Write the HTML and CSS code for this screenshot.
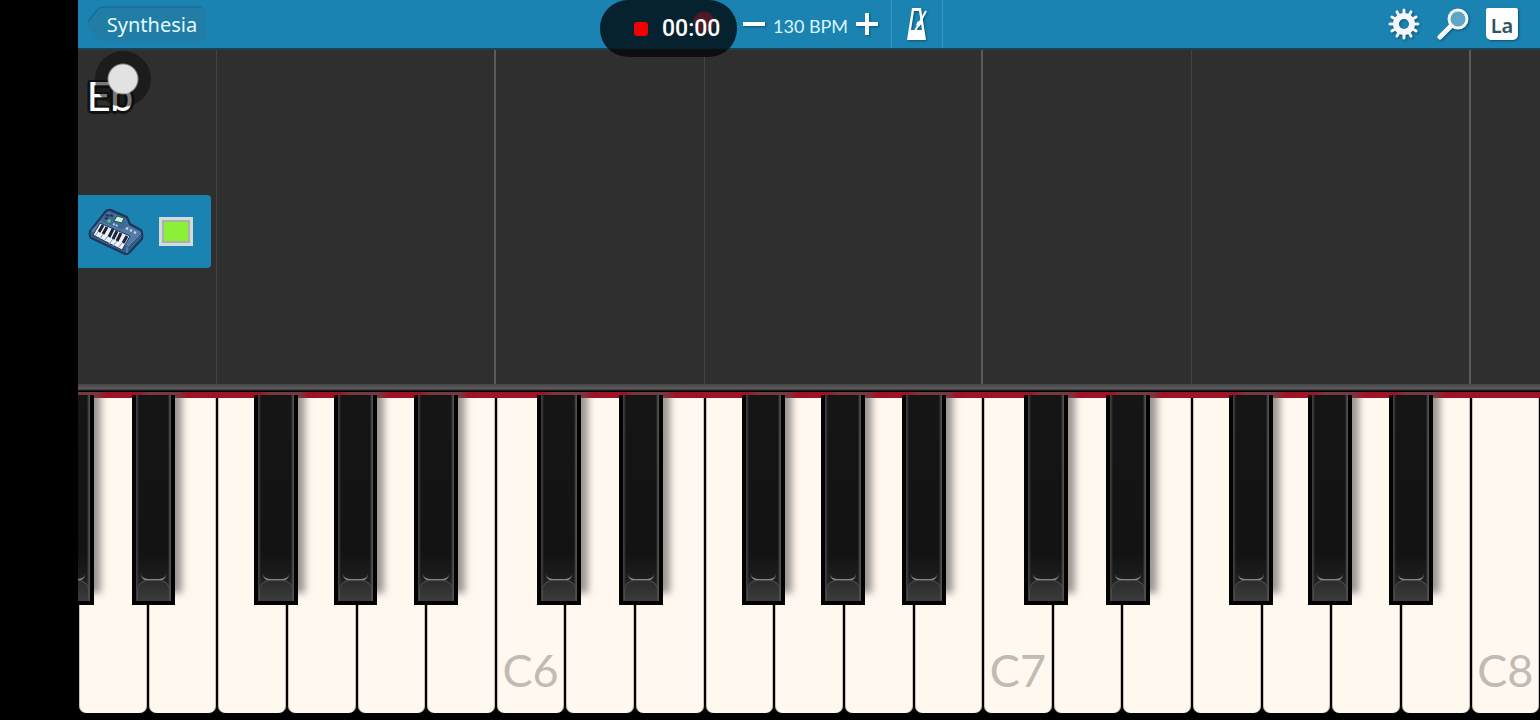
FILE: index.html
```html
<!DOCTYPE html>
<html lang="en">
<head>
    <meta charset="UTF-8">
    <meta name="viewport" content="width=device-width, initial-scale=1.0">
    <title>Synthesia</title>
    <link rel="stylesheet" href="styles.css">
</head>
<body>
    <div class="app">
        <header class="toolbar">
            <button class="back">
                <svg class="back-shape" viewBox="0 0 118 35" preserveAspectRatio="none" aria-hidden="true">
                    <path d="M17 1H114Q117 1 117 4V31Q117 34 114 34H17Q13 34 10 30L2 20Q0 17.500 2 15L10 5Q13 1 17 1Z" fill="#217da6"/>
                    <path d="M2 15L10 5Q13 1 17 1H114" fill="none" stroke="#17688f"/>
                </svg>
                <span class="back-label">Synthesia</span>
            </button>
            <div class="tempo">
                <button class="tempo-step" aria-label="Slower">
                    <svg width="24" height="24" viewBox="0 0 24 24"><path d="M1 12H23" stroke="#fff" stroke-width="4"/></svg>
                </button>
                <span class="bpm">130 BPM</span>
                <button class="tempo-step" aria-label="Faster">
                    <svg width="24" height="24" viewBox="0 0 24 24"><path d="M1 12H23M12 1V23" stroke="#fff" stroke-width="4"/></svg>
                </button>
            </div>
            <button class="metronome" aria-label="Metronome">
                <svg width="22" height="34" viewBox="0 0 22 34">
                    <path fill="#fff" fill-rule="evenodd" d="M6 1H15L20 33H1ZM8 4L5 23H16L13 4Z"/>
                    <path d="M9 24L20 4" stroke="#fff" stroke-width="2"/>
                    <path d="M12 14L16 16L13 20L10 18Z" fill="#fff"/>
                </svg>
            </button>
            <div class="tools">
                <button aria-label="Settings">
                    <svg width="32" height="32" viewBox="0 0 32 32">
                        <circle cx="16" cy="16" r="8" fill="none" stroke="#f4f7fa" stroke-width="6"/>
                        <g stroke="#f4f7fa" stroke-width="3" stroke-linecap="round">
                            <path d="M16 2V7M16 25V30M2 16H7M25 16H30"/>
                            <path d="M16 2V7M16 25V30M2 16H7M25 16H30" transform="rotate(30 16 16)"/>
                            <path d="M16 2V7M16 25V30M2 16H7M25 16H30" transform="rotate(60 16 16)"/>
                        </g>
                    </svg>
                </button>
                <button aria-label="Zoom">
                    <svg width="32" height="32" viewBox="0 0 32 32">
                        <path d="M3 29L14 18" stroke="#f4f7fa" stroke-width="5" stroke-linecap="round"/>
                        <circle cx="21" cy="11" r="9" fill="#5fa5c5" stroke="#f4f7fa" stroke-width="3"/>
                    </svg>
                </button>
                <button class="note-labels" aria-label="Note labels">La</button>
            </div>
            <div class="recorder"><span class="rec-dot"></span><time>00:00</time></div>
        </header>

        <main class="roll">
            <div class="lane octave-f" style="flex-grow: 2"></div>
            <div class="lane octave-c" style="flex-grow: 4"></div>
            <div class="lane octave-f" style="flex-grow: 3"></div>
            <div class="lane octave-c" style="flex-grow: 4"></div>
            <div class="lane octave-f" style="flex-grow: 3"></div>
            <div class="lane octave-c" style="flex-grow: 4"></div>
            <div class="lane" style="flex-grow: 1"></div>
            <div class="chord">Eb</div>
            <div class="touch"></div>
            <div class="devices">
                <button aria-label="Keyboard">
                    <svg width="56" height="48" viewBox="0 0 56 48">
                        <path d="M2 23L18 3Q20 1 23 2L39 9L42 16L53 22Q55 24 54 31L41 45Q38 47 35 45L3 30Q1 28 2 23Z" fill="#345f8b" stroke="#1c3559" stroke-width="2"/>
                        <path d="M3 23L20 4L38 11L41 18L53 24L39 38Z" fill="#547da6"/>
                        <path d="M19 5L37 11L40 18L34 22L12 13Z" fill="#416993"/>
                        <path d="M12 15L42 28L34 42L5 27Z" fill="#edf0f7" stroke="#1c3559"/>
                        <path d="M15 17L11 24M19 19L15 26M25 21L21 29M29 23L25 31M33 25L29 33M39 28L35 35" stroke="#18233b" stroke-width="3"/>
                        <path d="M10 24L7 28M15 26L12 31M20 28L16 33M25 31L21 36M29 33L25 38M34 35L30 40" stroke="#8796ab"/>
                        <path d="M29 8L36 10L34 15L26 13Z" fill="#c8f6c6" stroke="#2b5072"/>
                        <path d="M18 7L21 8M17 10L20 11M22 7L25 8" stroke="#1d3455" stroke-width="2"/>
                        <circle cx="21" cy="13" r="2" fill="#4cb997"/>
                        <path d="M38 20L40 21M42 22L44 23M46 24L48 25" stroke="#c9d6ec" stroke-width="2"/>
                        <path d="M25 16L30 18" stroke="#bacdea" stroke-width="2" stroke-dasharray="2 1"/>
                        <path d="M39 39V45M40 38L53 25" stroke="#7396ba"/>
                    </svg>
                </button>
                <button class="screen" aria-label="Display"></button>
            </div>
        </main>

        <div class="rail"></div>

        <section class="piano" aria-label="Piano">
            <div class="key"><button class="white"></button><button class="black prev-c"></button><button class="black d"></button></div>
            <div class="key"><button class="white"></button></div>
            <div class="key"><button class="white"></button><button class="black f"></button></div>
            <div class="key"><button class="white"></button><button class="black g"></button></div>
            <div class="key"><button class="white"></button><button class="black a"></button></div>
            <div class="key"><button class="white"></button></div>
            <div class="key"><button class="white">C6</button><button class="black c"></button></div>
            <div class="key"><button class="white"></button><button class="black d"></button></div>
            <div class="key"><button class="white"></button></div>
            <div class="key"><button class="white"></button><button class="black f"></button></div>
            <div class="key"><button class="white"></button><button class="black g"></button></div>
            <div class="key"><button class="white"></button><button class="black a"></button></div>
            <div class="key"><button class="white"></button></div>
            <div class="key"><button class="white">C7</button><button class="black c"></button></div>
            <div class="key"><button class="white"></button><button class="black d"></button></div>
            <div class="key"><button class="white"></button></div>
            <div class="key"><button class="white"></button><button class="black f"></button></div>
            <div class="key"><button class="white"></button><button class="black g"></button></div>
            <div class="key"><button class="white"></button><button class="black a"></button></div>
            <div class="key"><button class="white"></button></div>
            <div class="key"><button class="white">C8</button></div>
        </section>
    </div>
</body>
</html>
```
FILE: styles.css
```css
* {
    box-sizing: border-box;
}
body {
    margin: 0;
    padding-left: 78px;
    background-color: #000;
    color: #fff;
    font-family: Lato, sans-serif;
}
button {
    margin: 0;
    padding: 0;
    border: none;
    background: none;
    color: inherit;
    font-family: inherit;
    cursor: pointer;
}
svg {
    display: block;
}
.app {
    display: flex;
    flex-direction: column;
    min-height: 100vh;
}

/* toolbar */
.toolbar {
    position: relative;
    display: flex;
    align-items: center;
    height: 50px;
    padding: 0 22px 0 8px;
    background-color: #1a83b1;
    border-bottom: 2px solid #1b4254;
}
.back {
    position: relative;
    width: 120px;
    height: 36px;
    padding-left: 12px;
    font-size: 20px;
}
.back-shape {
    position: absolute;
    inset: 0;
    width: 100%;
    height: 100%;
}
.back-label {
    position: relative;
    font-family: "Noto Sans", sans-serif;
    color: #e2fbff;
}
.tempo {
    display: flex;
    align-items: center;
    gap: 7px;
    height: 100%;
    margin-left: 456px;
    padding: 0 12px 0 80px;
    border-right: 1px solid #3a94bb;
}
.tempo svg,
.metronome svg,
.tools svg {
    filter: drop-shadow(1px 1px 1px #12526f);
}
.bpm {
    padding-top: 4px;
    font-size: 18px;
    color: #dcf6ff;
}
.metronome {
    display: flex;
    align-items: center;
    justify-content: center;
    width: 51px;
    height: 100%;
    border-right: 1px solid #3a94bb;
}
.tools {
    display: flex;
    align-items: center;
    gap: 17px;
    margin-left: auto;
}
.note-labels {
    width: 32px;
    height: 32px;
    padding-top: 4px;
    border-radius: 2px 2px 5px 5px;
    background-color: #fff;
    box-shadow: 1px 1px 2px #12526f;
    color: #2d5560;
    font-family: "Noto Sans", sans-serif;
    font-size: 20px;
    font-weight: 600;
    line-height: 28px;
}
.recorder {
    position: absolute;
    top: 0;
    left: 522px;
    z-index: 3;
    display: flex;
    align-items: center;
    gap: 14px;
    width: 137px;
    height: 57px;
    padding-left: 34px;
    border-radius: 28px;
    background: radial-gradient(circle at 104px 22px, #4d1a28 9px, transparent 12px), linear-gradient(#06222f 48px, #0c0e0f 50px);
    font-family: Roboto, sans-serif;
    font-size: 23px;
    font-weight: 500;
}
.rec-dot {
    width: 14px;
    height: 14px;
    border-radius: 3px;
    background-color: #f00000;
}

/* note area */
.roll {
    position: relative;
    display: flex;
    flex: 1;
    background-color: #2f2f30;
}
.lane {
    flex-basis: 0;
}
.octave-f {
    border-right: 1px solid #444445;
}
.octave-c {
    border-right: 2px solid #5a5a5b;
}
.chord {
    position: absolute;
    top: 29px;
    left: 7px;
    padding: 0 2px;
    font-family: Roboto, sans-serif;
    font-size: 41px;
    line-height: 36px;
    text-shadow: -2px -2px #111, 2px -2px #111, -2px 2px #111, 2px 2px #111, 0 3px #111, 3px 0 #111, -3px 0 #111;
}
.touch {
    position: absolute;
    top: 1px;
    left: 17px;
    width: 56px;
    height: 56px;
    border-radius: 50%;
    background: radial-gradient(circle, #e2e2e2 14px, rgba(12, 12, 12, 0.55) 16px);
}
.devices {
    position: absolute;
    top: 145px;
    left: 0;
    display: flex;
    align-items: center;
    gap: 15px;
    width: 133px;
    height: 73px;
    padding-left: 10px;
    border-radius: 0 4px 4px 0;
    background-color: #1a83b1;
}
.screen {
    width: 34px;
    height: 29px;
    border: 3px solid #d3dbdd;
    outline: 2px solid #a8b2a5;
    outline-offset: -5px;
    background-color: #8cf03a;
}

/* keyboard */
.rail {
    height: 8px;
    background: linear-gradient(#454546, #5c5c5e 5px, #000 7px);
}
.piano {
    display: flex;
    height: 328px;
    padding-bottom: 6px;
    border-top: 6px solid #9f1228;
    clip-path: inset(0);
}
.key {
    position: relative;
    flex: 1;
}
.white {
    display: block;
    width: 100%;
    height: 100%;
    padding: 228px 0 0;
    border: 1px solid #000;
    border-top: none;
    border-radius: 0 0 8px 8px;
    background-color: #fff8ef;
    box-shadow: inset 1px 0 #c9c0b7, inset -1px 0 #c9c0b7;
    color: #c3bab3;
    font-size: 45px;
    line-height: 56px;
}
.black {
    position: absolute;
    top: -3px;
    z-index: 2;
    width: 63%;
    height: 210px;
    border: solid #030303;
    border-width: 0 4px 4px;
    background: linear-gradient(90deg, #3c3c3b 1px, transparent 3px, transparent calc(100% - 3px), #50504f calc(100% - 1px)), linear-gradient(#151515, #131313 160px, #262727);
    box-shadow: 9px -10px 7px -2px rgba(90, 85, 85, 0.6);
}
.black::before {
    content: "";
    position: absolute;
    right: 5px;
    bottom: 20px;
    left: 5px;
    height: 6px;
    border-bottom: 2px solid #858585;
    border-radius: 0 0 7px 7px;
}
.black::after {
    content: "";
    position: absolute;
    right: 1px;
    bottom: 0;
    left: 1px;
    height: 20px;
    border: 1px solid #4c4c4c;
    border-bottom: none;
    border-radius: 10px 10px 0 0;
    background: linear-gradient(#2c2c2c, #3b3b3b);
}
.prev-c {
    left: -40%;
}
.c {
    left: 59%;
}
.d {
    left: 77%;
}
.f {
    left: 53%;
}
.g {
    left: 67%;
}
.a {
    left: 83%;
}
```
